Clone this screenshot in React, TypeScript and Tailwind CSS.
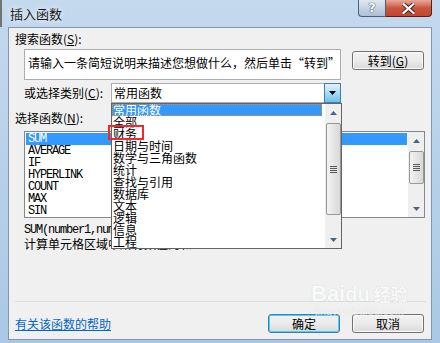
import React from "react";

const cjk = "font-['SimSun','Noto_Sans_CJK_SC',sans-serif]";
const mono = "font-['Liberation_Mono','Noto_Sans_CJK_SC',monospace]";

const categories = [
  "常用函数",
  "全部",
  "财务",
  "日期与时间",
  "数学与三角函数",
  "统计",
  "查找与引用",
  "数据库",
  "文本",
  "逻辑",
  "信息",
  "工程",
];

const functions = ["SUM", "AVERAGE", "IF", "HYPERLINK", "COUNT", "MAX", "SIN"];

function Arrow({ up }: { up?: boolean }) {
  return (
    <svg width="7" height="4" viewBox="0 0 7 4">
      <path d={up ? "M0 4 L3.5 0 L7 4 Z" : "M0 0 L7 0 L3.5 4 Z"} fill="#4d6185" />
    </svg>
  );
}

function Grip() {
  return (
    <div className="flex flex-col gap-[1px]">
      <div className="w-[7px] h-[1px] bg-[#5a5a5a]" />
      <div className="w-[7px] h-[1px] bg-[#5a5a5a]" />
      <div className="w-[7px] h-[1px] bg-[#5a5a5a]" />
      <div className="w-[7px] h-[1px] bg-[#5a5a5a]" />
    </div>
  );
}

function Scrollbar({ thumbTop, thumbH }: { thumbTop: number; thumbH: number }) {
  return (
    <div className="w-[16px] h-full bg-[#efefef] flex flex-col items-center">
      <div className="h-[17px] w-full flex items-center justify-center">
        <Arrow up />
      </div>
      <div style={{ marginTop: thumbTop, height: thumbH }} className="w-[15px] rounded-[2px] border border-[#979797] bg-gradient-to-r from-[#f3f3f3] to-[#d8d8d8] flex items-center justify-center">
        <Grip />
      </div>
      <div className="flex-1" />
      <div className="h-[17px] w-full flex items-center justify-center">
        <Arrow />
      </div>
    </div>
  );
}

function Button({ children, focused }: { children: React.ReactNode; focused?: boolean }) {
  return (
    <div
      className={`w-[72px] h-[19px] rounded-[3px] border flex items-center justify-center text-[12px] text-black ${cjk} ${
        focused
          ? "border-[#3c7fb1] shadow-[inset_0_0_0_1px_#48d0f8]"
          : "border-[#707070] shadow-[inset_0_0_0_1px_#fbfbfb]"
      } bg-gradient-to-b from-[#f2f2f2] via-[#ebebeb] to-[#d9d9d9]`}
    >
      {children}
    </div>
  );
}

export default function App() {
  return (
    <div className="w-[440px] h-[343px] overflow-hidden bg-gradient-to-b from-[#c4d9ee] to-[#aac8e6] flex flex-col relative">
      {/* title bar */}
      <div className="h-[27px] flex items-start relative">
        <div className="absolute left-0 top-0 bottom-0 w-[2px] bg-[#6f7478]" />
        <div className={`pl-[10px] pt-[7px] text-[13px] leading-[14px] text-[#1b1b1b] ${cjk} [text-shadow:0_0_6px_#ffffff]`}>
          插入函数
        </div>
        <div className="flex-1" />
        <div className="flex mr-[8px]">
          <div className="w-[28px] h-[17px] border border-[#4a5f78] border-t-0 rounded-bl-[4px] bg-gradient-to-b from-[#dfe8f1] to-[#aebfd2] flex items-center justify-center text-[13px] font-bold text-white font-['DejaVu_Sans',sans-serif] [text-shadow:0_0_1px_#233a55,0_0_1px_#233a55]">
            ?
          </div>
          <div className="w-[46px] h-[17px] border border-[#5a1e12] border-t-0 border-l-0 rounded-br-[4px] bg-gradient-to-b from-[#e8a89a] via-[#c9553e] to-[#c2452c] flex items-center justify-center">
            <svg width="13" height="11" viewBox="0 0 13 11">
              <path d="M1.5 1 L11.5 10 M11.5 1 L1.5 10" stroke="#3a1a14" strokeWidth="4" strokeLinecap="square" />
              <path d="M1.5 1 L11.5 10 M11.5 1 L1.5 10" stroke="#ffffff" strokeWidth="2.2" strokeLinecap="square" />
            </svg>
          </div>
        </div>
      </div>

      {/* client area */}
      <div className="flex-1 ml-[8px] mr-[8px] mb-[3px] border border-[#8496aa] bg-[#f0f0f0] relative flex flex-col">
        <div className={`ml-[6px] mt-[4px] h-[14px] leading-[14px] text-[12px] text-black ${cjk}`}>
          搜索函数(<span className="underline">S</span>):
        </div>
        <div className="flex items-start mt-[3px]">
          <div className={`ml-[15px] w-[317px] h-[31px] bg-white border border-[#abadb3] pl-[3px] pt-[6px] text-[12px] leading-[14px] text-black whitespace-nowrap overflow-hidden ${cjk}`}>
            请输入一条简短说明来描述您想做什么，然后单击“转到”
          </div>
          <div className="ml-[11px] mt-[2px]">
            <Button>
              转到(<span className="underline">G</span>)
            </Button>
          </div>
        </div>
        <div className="flex items-center mt-[3px] h-[20px]">
          <div className={`ml-[15px] w-[87px] text-[12px] leading-[14px] text-black ${cjk}`}>
            或选择类别(<span className="underline">C</span>):
          </div>
          <div className="w-[230px] h-[20px] bg-white border border-[#abadb3] flex items-center">
            <div className={`flex-1 pl-[2px] text-[12px] leading-[14px] text-black ${cjk}`}>常用函数</div>
            <div className="w-[17px] h-[20px] -mr-[1px] border border-[#3c7fb1] bg-gradient-to-b from-[#e3f3fc] via-[#a9dbf6] to-[#6ebfe8] flex items-center justify-center">
              <svg width="7" height="4" viewBox="0 0 7 4">
                <path d="M0 0 L7 0 L3.5 4 Z" fill="#000" />
              </svg>
            </div>
          </div>
        </div>
        <div className={`ml-[6px] mt-[8px] h-[14px] leading-[14px] text-[12px] text-black ${cjk}`}>
          选择函数(<span className="underline">N</span>):
        </div>
        <div className="ml-[15px] mt-[6px] w-[401px] h-[87px] bg-white border border-[#828790] flex">
          <div className="pl-[1px] pt-[1px] w-[383px] flex flex-col">
            {functions.map((f, i) => (
              <div
                key={f}
                className={`h-[12px] leading-[12px] pl-[2px] text-[12px] tracking-[-1.2px] ${mono} ${
                  i === 0 ? "bg-[#3399ff] text-white w-[381px]" : "text-black"
                }`}
              >
                {f}
              </div>
            ))}
          </div>
          <Scrollbar thumbTop={2} thumbH={33} />
        </div>
        <div className={`ml-[15px] mt-[6px] h-[13px] leading-[13px] text-[12px] tracking-[-1.2px] text-black whitespace-nowrap ${mono}`}>
          SUM(number1,number2,...)
        </div>
        <div className={`ml-[15px] h-[14px] leading-[14px] text-[12px] text-black whitespace-nowrap ${cjk}`}>
          计算单元格区域中所有数值的和
        </div>
        <div className="ml-[6px] mr-[5px] mt-[50px] h-[1px] bg-[#d5dfe5]" />
        <div className="flex items-center mt-[12px] h-[19px] pl-[6px]">
          <a className={`text-[12px] leading-[14px] text-[#0066cc] underline ${cjk}`}>有关该函数的帮助</a>
          <div className="flex-1" />
          <Button focused>确定</Button>
          <div className="ml-[12px] mr-[7px]">
            <Button>取消</Button>
          </div>
        </div>

        {/* open category dropdown */}
        <div className="absolute left-[102px] top-[75px] w-[231px] h-[146px] bg-white border border-[#646464] flex">
          <div className="w-[210px] flex flex-col">
            {categories.map((c, i) => (
              <div
                key={c}
                className={`h-[12px] leading-[12px] pl-[1px] text-[12px] whitespace-nowrap ${cjk} ${
                  i === 0 ? "bg-[#3399ff] text-white outline outline-1 outline-dotted outline-[#e08a2e] -outline-offset-1" : "text-black"
                }`}
              >
                {c}
              </div>
            ))}
          </div>
          <div className="w-[3px]" />
          <Scrollbar thumbTop={2} thumbH={92} />
        </div>
        <div className="absolute left-[99px] top-[97px] w-[36px] h-[15px] border-2 border-[#ee2a2a]" />

        {/* watermark */}
        <div className="absolute left-[302px] top-[255px] flex flex-col items-center pointer-events-none opacity-60">
          <div className="flex items-end text-white font-['Liberation_Sans',sans-serif] font-bold text-[22px] leading-[22px] [text-shadow:0_0_1px_#b8b8b8]">
            Bai<span className="text-[20px]">du</span>
            <span className={`ml-[4px] text-[17px] ${cjk}`}>经验</span>
          </div>
          <div className="text-white text-[11px] leading-[12px] font-['Liberation_Sans',sans-serif] [text-shadow:0_0_1px_#b8b8b8]">
            jingyan.baidu.com
          </div>
        </div>
      </div>
    </div>
  );
}
